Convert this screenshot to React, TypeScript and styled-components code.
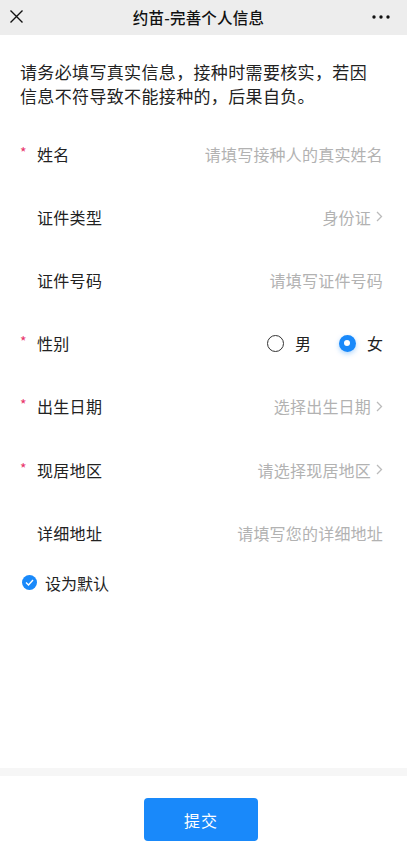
import React from "react";
import styled, { createGlobalStyle } from "styled-components";

const Global = createGlobalStyle`
  html, body { margin: 0; padding: 0; background: #fff; }
  body { font-family: "Noto Sans CJK SC", "Noto Sans", sans-serif; color: #222; }
  * { box-sizing: border-box; }
`;

const Page = styled.div`
  height: 851px;
  display: flex;
  flex-direction: column;
  background: #fff;
`;

const Header = styled.div`
  height: 35px;
  flex: none;
  background: #ededed;
  display: flex;
  align-items: center;
  justify-content: space-between;
  padding: 0 17px 2px 7px;
`;

const Title = styled.div`
  font-size: 15.5px;
  font-weight: 500;
  color: #111;
  letter-spacing: 0.2px;
`;

const IconBox = styled.div`
  width: 18px;
  height: 18px;
  display: flex;
  align-items: center;
  justify-content: center;
`;

const Content = styled.div`
  flex: 1;
`;

const Intro = styled.p`
  margin: 0;
  padding: 25px 38px 0 20px;
  font-size: 17px;
  line-height: 24px;
  color: #222;
  letter-spacing: 0.35px;
`;

const Form = styled.div`
  margin-top: 14px;
`;

const Row = styled.div`
  height: 63.2px;
  display: flex;
  align-items: center;
  padding: 0 24px 0 20px;
`;

const Star = styled.span<{ $show: boolean }>`
  width: 17px;
  flex: none;
  color: #e8336b;
  font-size: 14px;
  line-height: 1;
  margin-top: -4px;
  visibility: ${(p) => (p.$show ? "visible" : "hidden")};
`;

const Label = styled.span`
  font-size: 16px;
  color: #222;
  letter-spacing: 0.3px;
`;

const Value = styled.div`
  margin-left: auto;
  display: flex;
  align-items: center;
  gap: 5px;
  font-size: 16px;
  color: #b2b2b2;
  letter-spacing: 0.2px;
`;

const Radios = styled.div`
  margin-left: auto;
  display: flex;
  align-items: center;
  gap: 28px;
`;

const RadioItem = styled.label`
  display: flex;
  align-items: center;
  gap: 11px;
  font-size: 16px;
  color: #222;
`;

const RadioCircle = styled.span<{ $checked: boolean }>`
  width: 17px;
  height: 17px;
  border-radius: 50%;
  display: flex;
  align-items: center;
  justify-content: center;
  border: ${(p) => (p.$checked ? "none" : "1.5px solid #333")};
  background: ${(p) => (p.$checked ? "#1989fa" : "#fff")};
  box-shadow: ${(p) => (p.$checked ? "0 2px 5px rgba(25,137,250,0.35)" : "none")};
  &::after {
    content: "";
    width: 6px;
    height: 6px;
    border-radius: 50%;
    background: #fff;
    display: ${(p) => (p.$checked ? "block" : "none")};
  }
`;

const DefaultRow = styled.div`
  height: 37px;
  display: flex;
  align-items: center;
  gap: 8px;
  padding-left: 22px;
  font-size: 16px;
  color: #222;
`;

const Check = styled.span`
  width: 15px;
  height: 15px;
  border-radius: 50%;
  background: #1989fa;
  display: flex;
  align-items: center;
  justify-content: center;
`;

const Footer = styled.div`
  flex: none;
  border-top: 8px solid #f6f6f6;
  padding: 22px 5px 10px 0;
  display: flex;
  justify-content: center;
`;

const Submit = styled.button`
  width: 114px;
  height: 43px;
  border: none;
  border-radius: 4px;
  background: #1989fa;
  color: #fff;
  font-family: inherit;
  font-size: 16px;
  letter-spacing: 1px;
`;

const Chevron = () => (
  <svg width="7" height="11" viewBox="0 0 7 11">
    <path d="M1 1 L5.5 5.5 L1 10" fill="none" stroke="#bbb" strokeWidth="1.3" />
  </svg>
);

type Field = { label: string; req: boolean; value: string; arrow?: boolean };

const fields1: Field[] = [
  { label: "姓名", req: true, value: "请填写接种人的真实姓名" },
  { label: "证件类型", req: false, value: "身份证", arrow: true },
  { label: "证件号码", req: false, value: "请填写证件号码" },
];

const fields2: Field[] = [
  { label: "出生日期", req: true, value: "选择出生日期", arrow: true },
  { label: "现居地区", req: true, value: "请选择现居地区", arrow: true },
  { label: "详细地址", req: false, value: "请填写您的详细地址" },
];

const FieldRow = ({ f }: { f: Field }) => (
  <Row>
    <Star $show={f.req}>*</Star>
    <Label>{f.label}</Label>
    <Value>
      {f.value}
      {f.arrow && <Chevron />}
    </Value>
  </Row>
);

export default function App() {
  return (
    <>
      <Global />
      <Page>
        <Header>
          <IconBox>
            <svg width="15" height="15" viewBox="0 0 15 15">
              <path d="M1.5 1.5 L13.5 13.5 M13.5 1.5 L1.5 13.5" stroke="#111" strokeWidth="1.4" />
            </svg>
          </IconBox>
          <Title>约苗-完善个人信息</Title>
          <IconBox>
            <svg width="18" height="4" viewBox="0 0 18 4">
              <circle cx="2" cy="2" r="1.7" fill="#111" />
              <circle cx="9" cy="2" r="1.7" fill="#111" />
              <circle cx="16" cy="2" r="1.7" fill="#111" />
            </svg>
          </IconBox>
        </Header>
        <Content>
          <Intro>请务必填写真实信息，接种时需要核实，若因信息不符导致不能接种的，后果自负。</Intro>
          <Form>
            {fields1.map((f) => (
              <FieldRow key={f.label} f={f} />
            ))}
            <Row>
              <Star $show>*</Star>
              <Label>性别</Label>
              <Radios>
                <RadioItem>
                  <RadioCircle $checked={false} />男
                </RadioItem>
                <RadioItem>
                  <RadioCircle $checked />女
                </RadioItem>
              </Radios>
            </Row>
            {fields2.map((f) => (
              <FieldRow key={f.label} f={f} />
            ))}
            <DefaultRow>
              <Check>
                <svg width="9" height="7" viewBox="0 0 9 7">
                  <path d="M1 3.5 L3.5 6 L8 1" fill="none" stroke="#fff" strokeWidth="1.4" />
                </svg>
              </Check>
              设为默认
            </DefaultRow>
          </Form>
        </Content>
        <Footer>
          <Submit>提交</Submit>
        </Footer>
      </Page>
    </>
  );
}
